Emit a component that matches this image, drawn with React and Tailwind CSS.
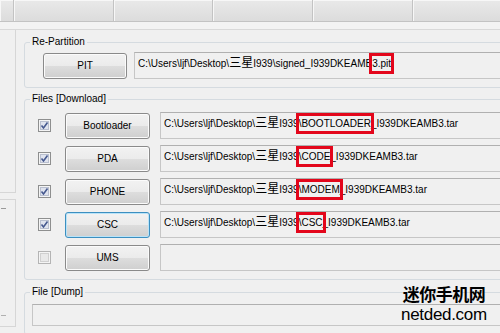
const rows = [
  { name: 'Bootloader', checked: true, mark: '\\BOOTLOADER', post: '_I939DKEAMB3.tar' },
  { name: 'PDA', checked: true, mark: '\\CODE', post: '_I939DKEAMB3.tar' },
  { name: 'PHONE', checked: true, mark: '\\MODEM', post: '_I939DKEAMB3.tar' },
  { name: 'CSC', checked: true, mark: '\\CSC', post: '_I939DKEAMB3.tar', focus: true },
  { name: 'UMS', checked: false },
];

const tabs = [14, 100, 99, 100, 100, 100];

const Mark = ({ children }) => (
  <span className="relative">
    {children}
    <span className="absolute -left-[3px] -right-[3px] -top-[5px] -bottom-[5px] border-[3px] border-[#e3061b]" />
  </span>
);

const Checkbox = ({ checked }) => (
  <svg width="13" height="13" viewBox="0 0 13 13" className="shrink-0">
    <rect x="0.5" y="0.5" width="12" height="12" fill="#f4f4f4" stroke={checked ? '#8e8f8f' : '#b4b4b4'} />
    <rect x="2.5" y="2.5" width="8" height="8" fill={checked ? '#dfe3ee' : '#e9e9e9'} stroke={checked ? '#b9bfcf' : '#d0d0d0'} />
    {checked && <path d="M3.5 6.5 L5.5 9 L9.5 3.5" fill="none" stroke="#46598f" strokeWidth="1.6" />}
  </svg>
);

const Button = ({ children, focus, className = '' }) => (
  <div
    className={`flex items-center justify-center h-[26px] rounded-[3px] border text-[10px] text-black ${
      focus
        ? 'border-[#3c8fc0] shadow-[inset_0_0_0_1px_#b9e3f8] bg-[linear-gradient(#f2f2f2_0%,#ebebeb_50%,#dddddd_51%,#cfcfcf_100%)]'
        : 'border-[#8a8a8a] shadow-[inset_0_0_0_1px_#fbfbfb] bg-[linear-gradient(#f2f2f2_0%,#ebebeb_50%,#dddddd_51%,#cfcfcf_100%)]'
    } ${className}`}
  >
    {children}
  </div>
);

const Field = ({ children, className = '' }) => (
  <div
    className={`flex-1 border border-[#c6c6c6] border-t-[#b0b0b0] bg-[#f0f0f0] pl-[3px] pt-[3px] text-[10px] leading-[14px] whitespace-nowrap ${className}`}
  >
    {children}
  </div>
);

const Group = ({ label, className = '', children }) => (
  <div className={`relative w-[490px] border border-[#d5dbe0] rounded-[3px] ${className}`}>
    <span className="absolute -top-[7px] left-[5px] px-[2px] bg-[#f0f0f0] text-[10px] leading-[12px] text-black">
      {label}
    </span>
    {children}
  </div>
);

const Path = ({ children }) => (
  <>
    C:\Users\ljf\Desktop\<span className="text-[12px]">三星</span>I939{children}
  </>
);

export default function App() {
  return (
    <div className="w-[500px] h-[333px] overflow-hidden relative bg-[#f0f0f0] flex flex-col font-['Liberation_Sans','Noto_Sans_CJK_SC',sans-serif] text-black">
      <div className="h-[22px] flex shrink-0">
        {tabs.map((w, i) => (
          <div
            key={i}
            style={{ width: w }}
            className="shrink-0 h-full border-r border-b border-[#c3c3c3] bg-[linear-gradient(#e9e9e9,#dcdcdc)] shadow-[inset_1px_1px_0_#f7f7f7]"
          />
        ))}
      </div>
      <div className="h-[7px] shrink-0 bg-[#f3f3f3]" />
      <div className="flex-1 flex border-t border-[#d9d9d9]">
        <div className="w-[16px] shrink-0 flex flex-col">
          <div className="h-[163px] border-r border-b border-[#d6d6d6]" />
          <div className="mt-[6px] h-[128px] border-r border-y border-[#d6d6d6] relative">
            <div className="absolute left-[1px] top-[8px] w-[5px] h-[1px] bg-[#9a9a9a]" />
            <div className="absolute left-[1px] top-[115px] w-[5px] h-[1px] bg-[#b0b0b0]" />
          </div>
        </div>
        <div className="flex flex-col pl-[8px] pt-[12px]">
          <Group label="Re-Partition" className="pt-[9px] pb-[8px] pl-[18px]">
            <div className="flex items-center h-[27px]">
              <Button className="w-[84px]">PIT</Button>
              <Field className="ml-[7px] h-[27px] pt-[3px]">
                <Path>
                  \signed_I939DKEAMB<Mark>3.pit</Mark>
                </Path>
              </Field>
            </div>
          </Group>

          <Group label="Files [Download]" className="mt-[11px] pt-[12px] pb-[8px] pl-[13px]">
            <div className="flex flex-col gap-[6px]">
              {rows.map((r) => (
                <div key={r.name} className="flex items-center h-[27px]">
                  <Checkbox checked={r.checked} />
                  <Button focus={r.focus} className="w-[85px] ml-[14px]">
                    {r.name}
                  </Button>
                  <Field className="ml-[10px] h-[27px]">
                    {r.mark && (
                      <Path>
                        <Mark>{r.mark}</Mark>
                        {r.post}
                      </Path>
                    )}
                  </Field>
                </div>
              ))}
            </div>
          </Group>

          <Group label="File [Dump]" className="mt-[12px] pt-[11px] pl-[7px] pb-[8px]">
            <Field className="h-[22px]" />
          </Group>
        </div>
      </div>

      <div className="absolute left-[401px] top-[285px] flex flex-col items-center leading-none">
        <span className="text-[17px] font-bold tracking-[-0.5px] font-['Noto_Sans_CJK_SC',sans-serif]">迷你手机网</span>
        <span className="mt-[4px] text-[17px] font-['Liberation_Sans',sans-serif] tracking-[-0.3px]">netded.com</span>
      </div>
    </div>
  );
}
